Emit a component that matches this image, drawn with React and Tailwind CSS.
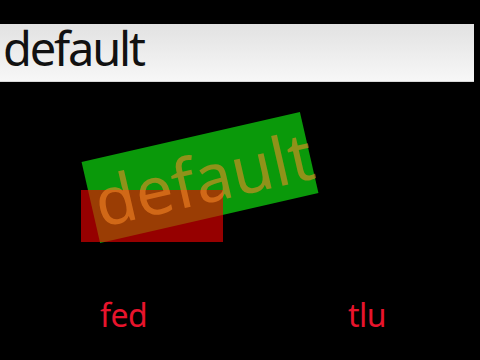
// App.jsx
const sans = { fontFamily: '"Noto Sans", "Open Sans", sans-serif' };

function Canvas() {
  return (
    <div className="relative h-[208px] w-[474px]">
      {/* rotated green label */}
      <div className="absolute left-[88px] top-[54px] h-[83px] w-[224px] -rotate-[12.9deg] bg-[#0a990a]" />
      {/* red box laid over it */}
      <div className="absolute left-[81px] top-[108px] h-[52px] w-[142px] bg-[rgba(250,0,0,0.6)]" />
      {/* text on top */}
      <div className="absolute left-[88px] top-[54px] h-[83px] w-[224px] -rotate-[12.9deg]">
        <span
          className="block whitespace-nowrap pl-[4px] pt-[9px] text-[67px] leading-none text-[rgba(255,140,40,0.55)]"
          style={sans}
        >
          default
        </span>
      </div>
    </div>
  );
}

export default function App() {
  return (
    <div className="h-[360px] w-[480px] overflow-hidden bg-black pt-[24px]" style={sans}>
      <div className="h-[58px] w-[474px] border-b border-[#d8d8d8] bg-gradient-to-b from-[#e2e2e2] to-[#f7f7f7] pl-[3px] pt-[1px]">
        <span className="block text-[47px] leading-none tracking-[-2.2px] text-[#111]">default</span>
      </div>
      <Canvas />
      <div className="flex h-[40px] w-[474px] items-start pt-[9px] pl-[100px] text-[32px] leading-none tracking-[-0.5px] text-[#e8142c]">
        <span className="w-[248px]">fed</span>
        <span>tlu</span>
      </div>
    </div>
  );
}
